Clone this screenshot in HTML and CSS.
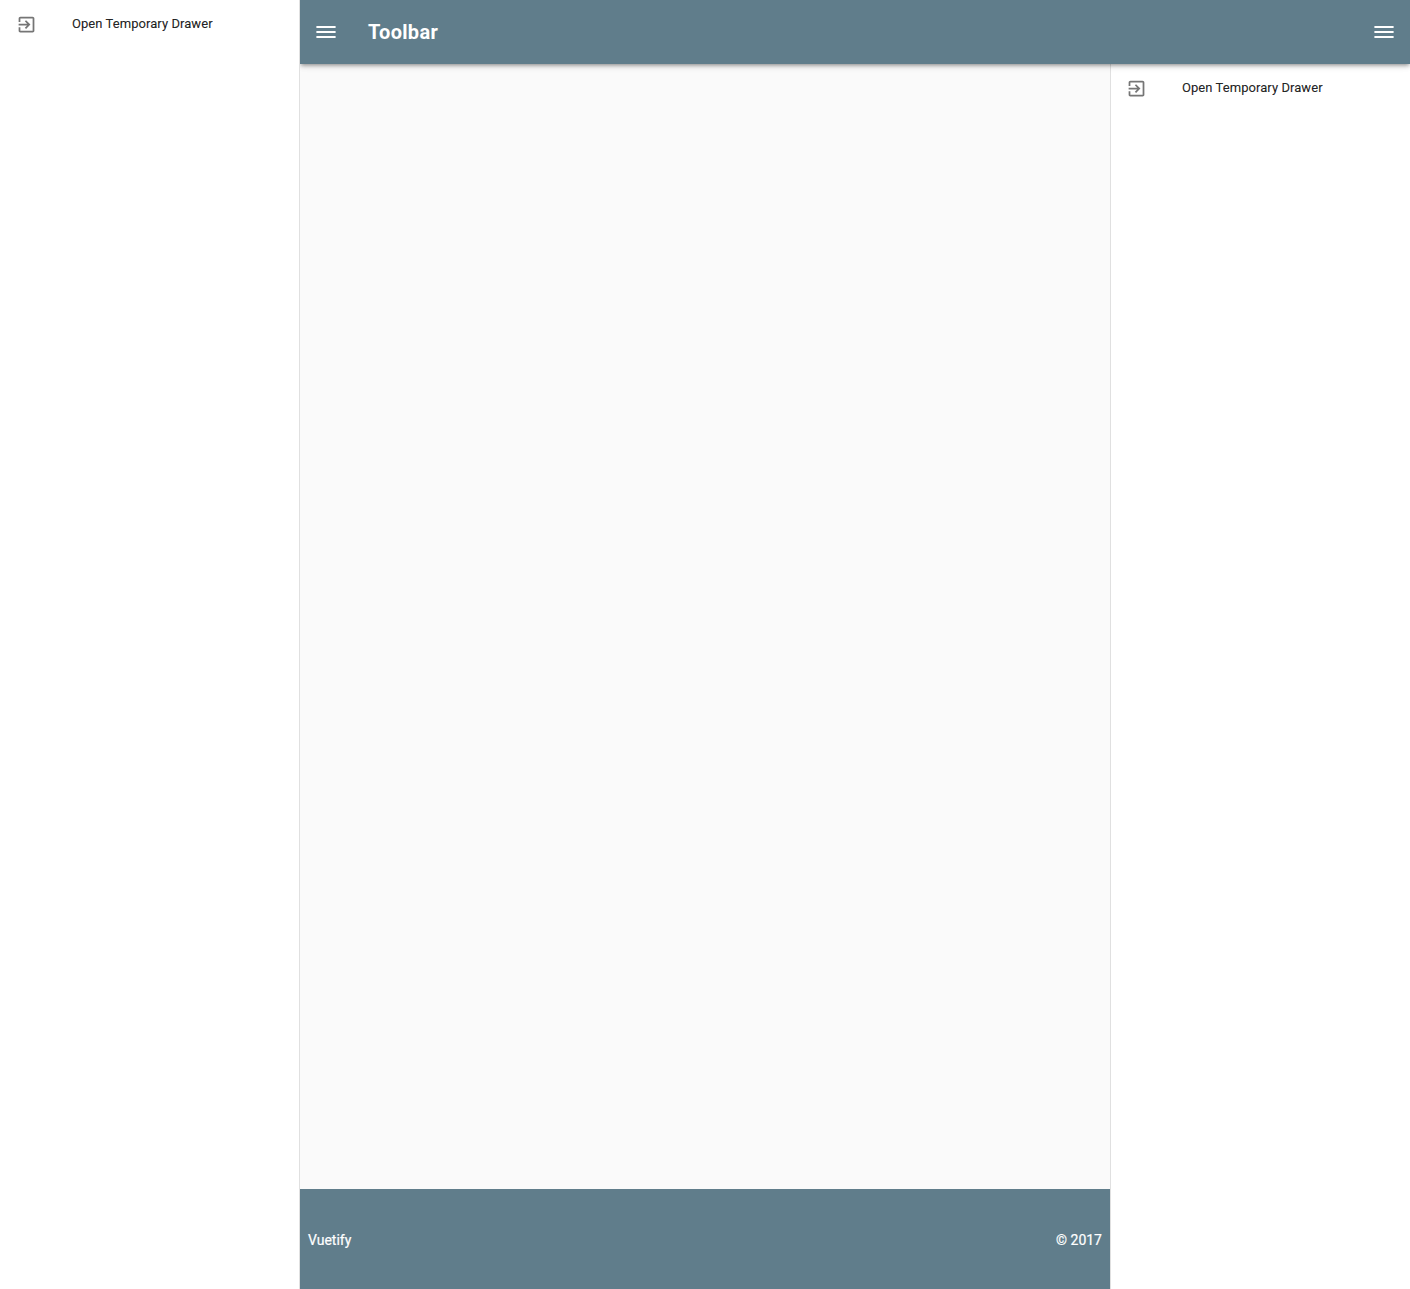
FILE: index.html
```
<!DOCTYPE html>
<html lang="en">
<head>
<meta charset="utf-8">
<title>Toolbar</title>
<link rel="stylesheet" href="styles.css">
</head>
<body>
<div class="app">
  <nav class="drawer drawer-left">
    <a class="tile">
      <svg class="tile-icon" viewBox="0 0 24 24"><path d="M10.09 15.59L11.5 17l5-5-5-5-1.41 1.41L12.67 11H3v2h9.67l-2.58 2.59zM19 3H5c-1.11 0-2 .9-2 2v4h2V5h14v14H5v-4H3v4c0 1.1.89 2 2 2h14c1.1 0 2-.9 2-2V5c0-1.1-.9-2-2-2z"/></svg>
      <span class="tile-title">Open Temporary Drawer</span>
    </a>
  </nav>
  <div class="page">
    <header class="toolbar">
      <svg class="menu-icon" viewBox="0 0 24 24"><path d="M2.4 18h19.2v-2H2.4v2zm0-5h19.2v-2H2.4v2zm0-7v2h19.2V6H2.4z"/></svg>
      <h1 class="toolbar-title">Toolbar</h1>
      <svg class="menu-icon" viewBox="0 0 24 24"><path d="M2.4 18h19.2v-2H2.4v2zm0-5h19.2v-2H2.4v2zm0-7v2h19.2V6H2.4z"/></svg>
    </header>
    <div class="body">
      <div class="content">
        <main class="main"></main>
        <footer class="footer"><span>Vuetify</span><span>© 2017</span></footer>
      </div>
      <nav class="drawer drawer-right">
        <a class="tile">
          <svg class="tile-icon" viewBox="0 0 24 24"><path d="M10.09 15.59L11.5 17l5-5-5-5-1.41 1.41L12.67 11H3v2h9.67l-2.58 2.59zM19 3H5c-1.11 0-2 .9-2 2v4h2V5h14v14H5v-4H3v4c0 1.1.89 2 2 2h14c1.1 0 2-.9 2-2V5c0-1.1-.9-2-2-2z"/></svg>
          <span class="tile-title">Open Temporary Drawer</span>
        </a>
      </nav>
    </div>
  </div>
</div>
</body>
</html>
```
FILE: styles.css
```
* { box-sizing: border-box; }
body {
  margin: 0;
  font-family: Roboto, sans-serif;
  background: #fafafa;
}
.app { display: flex; height: 100vh; }
.page { flex: 1; display: flex; flex-direction: column; }
.body { flex: 1; display: flex; }
.content { flex: 1; display: flex; flex-direction: column; }
.main { flex: 1; }
.drawer { width: 300px; background: #fff; flex: none; }
.drawer-left { position: relative; z-index: 2; border-right: 1px solid #e0e0e0; }
.drawer-right { border-left: 1px solid #e0e0e0; }
.tile {
  display: flex;
  align-items: center;
  height: 48px;
  padding: 0 16px;
  color: rgba(0, 0, 0, 0.87);
}
.drawer-right .tile { padding-left: 15px; }
.tile-icon {
  width: 21px;
  height: 21px;
  margin-right: 35px;
  fill: rgba(0, 0, 0, 0.54);
}
.tile-title {
  font-size: 13px;
  font-weight: 400;
  line-height: 24px;
  letter-spacing: 0.06px;
  -webkit-text-stroke: 0.15px currentColor;
}
.toolbar {
  position: relative;
  z-index: 1;
  display: flex;
  align-items: center;
  height: 64px;
  padding: 0 14px;
  color: #fff;
  background: #607d8b;
  box-shadow: 0 2px 4px -1px rgba(0, 0, 0, 0.4), 0 4px 5px 0 rgba(0, 0, 0, 0.06), 0 1px 10px 0 rgba(0, 0, 0, 0.06);
}
.menu-icon { width: 24px; height: 24px; fill: currentColor; }
.toolbar-title {
  flex: 1;
  margin: 0 0 0 30px;
  font-size: 20px;
  font-weight: 700;
  letter-spacing: 0.32px;
}
.footer {
  display: flex;
  align-items: center;
  justify-content: space-between;
  height: 100px;
  padding: 2px 8px 0;
  color: #fff;
  background: #607d8b;
  font-size: 14px;
  -webkit-text-stroke: 0.2px currentColor;
}
```
